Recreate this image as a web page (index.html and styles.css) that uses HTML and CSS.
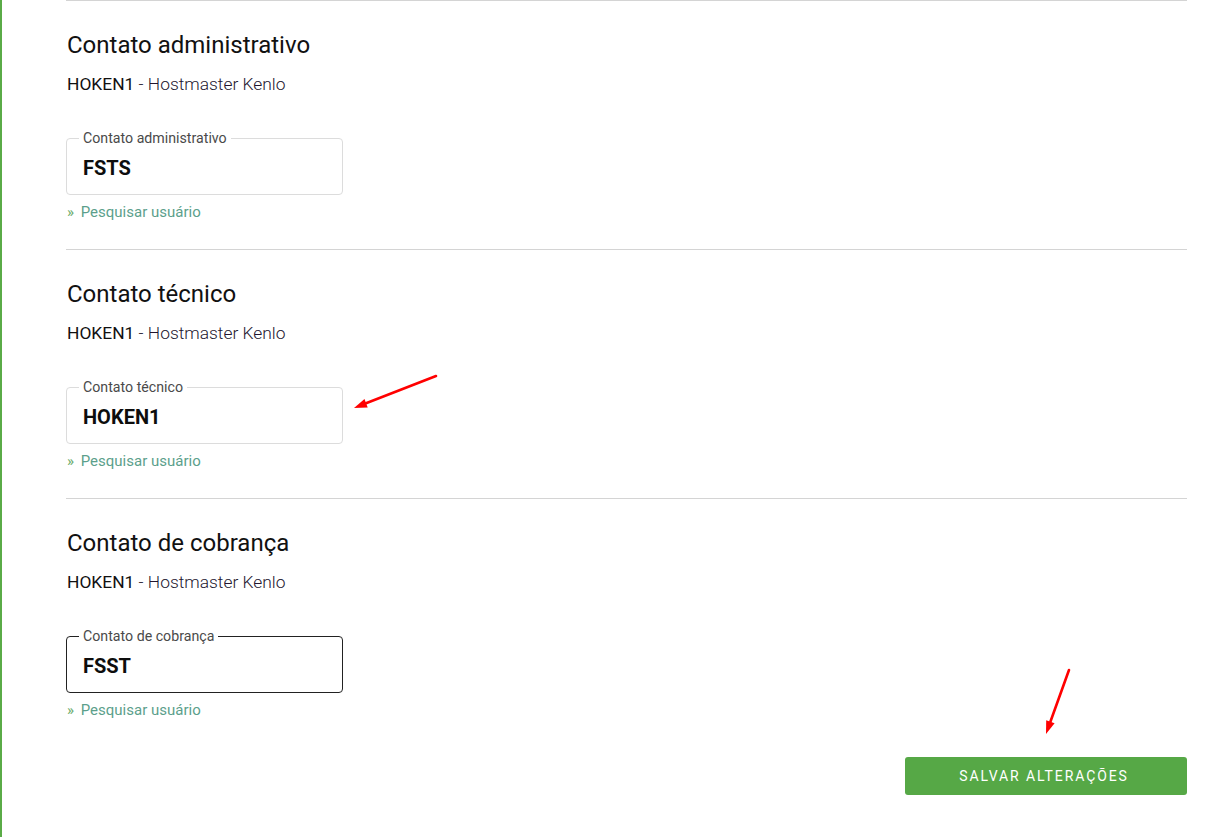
FILE: index.html
```html
<!DOCTYPE html>
<html lang="pt-BR">
<head>
<meta charset="utf-8">
<title>Contatos</title>
<link rel="stylesheet" href="styles.css">
</head>
<body>
<div class="page">
  <section class="section">
    <h2 class="title">Contato administrativo</h2>
    <p class="current"><span class="code">HOKEN1</span> - Hostmaster Kenlo</p>
    <fieldset class="field">
      <legend class="field-label">Contato administrativo</legend>
      <div class="field-value">FSTS</div>
    </fieldset>
    <a class="search" href="#"><span class="raquo">»</span> Pesquisar usuário</a>
  </section>
  <section class="section">
    <h2 class="title">Contato técnico</h2>
    <p class="current"><span class="code">HOKEN1</span> - Hostmaster Kenlo</p>
    <fieldset class="field">
      <legend class="field-label">Contato técnico</legend>
      <div class="field-value">HOKEN1</div>
    </fieldset>
    <a class="search" href="#"><span class="raquo">»</span> Pesquisar usuário</a>
  </section>
  <section class="section last">
    <h2 class="title">Contato de cobrança</h2>
    <p class="current"><span class="code">HOKEN1</span> - Hostmaster Kenlo</p>
    <fieldset class="field focused">
      <legend class="field-label">Contato de cobrança</legend>
      <div class="field-value">FSST</div>
    </fieldset>
    <a class="search" href="#"><span class="raquo">»</span> Pesquisar usuário</a>
  </section>
  <div class="actions">
    <button class="save" type="button">SALVAR ALTERAÇÕES</button>
  </div>
  <svg class="annotations" width="1208" height="837" viewBox="0 0 1208 837" aria-hidden="true">
    <line x1="436" y1="376" x2="366" y2="403.3" stroke="#ff0000" stroke-width="2.6" stroke-linecap="round"/>
    <polygon points="354,408 367.7,407.5 364.5,399.1" fill="#ff0000"/>
    <line x1="1069" y1="670" x2="1050.4" y2="721.8" stroke="#ff0000" stroke-width="2.6" stroke-linecap="round"/>
    <polygon points="1046,734 1054.6,723.3 1046.2,720.3" fill="#ff0000"/>
  </svg>
</div>
</body>
</html>
```
FILE: styles.css
```css
html, body {
  margin: 0;
  padding: 0;
  background: #ffffff;
}
body {
  font-family: Roboto, "Liberation Sans", Arial, sans-serif;
  color: #111111;
}
.page {
  position: relative;
  box-sizing: border-box;
  min-height: 837px;
  border-left: 2px solid #5aab47;
  padding: 0 21px 0 64px;
}
.section {
  border-top: 1px solid #d4d4d4;
  padding: 31px 0 28px 0;
}
.title {
  margin: 0;
  padding-left: 1px;
  font-size: 24px;
  line-height: 26px;
  font-weight: 400;
  color: #111111;
}
.current {
  margin: 16px 0 0 0;
  padding-left: 1px;
  font-size: 17.4px;
  line-height: 20px;
  font-weight: 300;
  color: #22152e;
}
.code {
  font-weight: 400;
  color: #111111;
}
.field {
  box-sizing: border-box;
  width: 277px;
  margin: 37px 0 0 0;
  padding: 0 16px 15px 16px;
  border: 1px solid #dcdcdc;
  border-radius: 4px;
  min-width: 0;
}
.field.focused {
  border-color: #222222;
}
.field-label {
  padding: 0 4px;
  margin-left: -4px;
  font-size: 14.2px;
  line-height: 14px;
  color: #4a4a4a;
}
.field-value {
  margin-top: 12px;
  font-size: 20px;
  line-height: 22px;
  font-weight: 700;
  color: #0d0d0d;
}
.search {
  display: block;
  margin-top: 8px;
  padding-left: 1px;
  font-size: 15px;
  line-height: 18px;
  color: #5c9f8c;
  text-decoration: none;
}
.raquo {
  color: #6aab6a;
  margin-right: 3px;
}
.actions {
  display: flex;
  justify-content: flex-end;
  padding-top: 10px;
}
.save {
  width: 282px;
  height: 38px;
  border: none;
  border-radius: 3px;
  background: #56a846;
  color: #ffffff;
  font-family: Roboto, "Liberation Sans", Arial, sans-serif;
  font-size: 14px;
  font-weight: 400;
  letter-spacing: 1.9px;
  padding-left: 2px;
  cursor: pointer;
}
.annotations {
  position: absolute;
  left: -2px;
  top: 0;
  pointer-events: none;
}
```
